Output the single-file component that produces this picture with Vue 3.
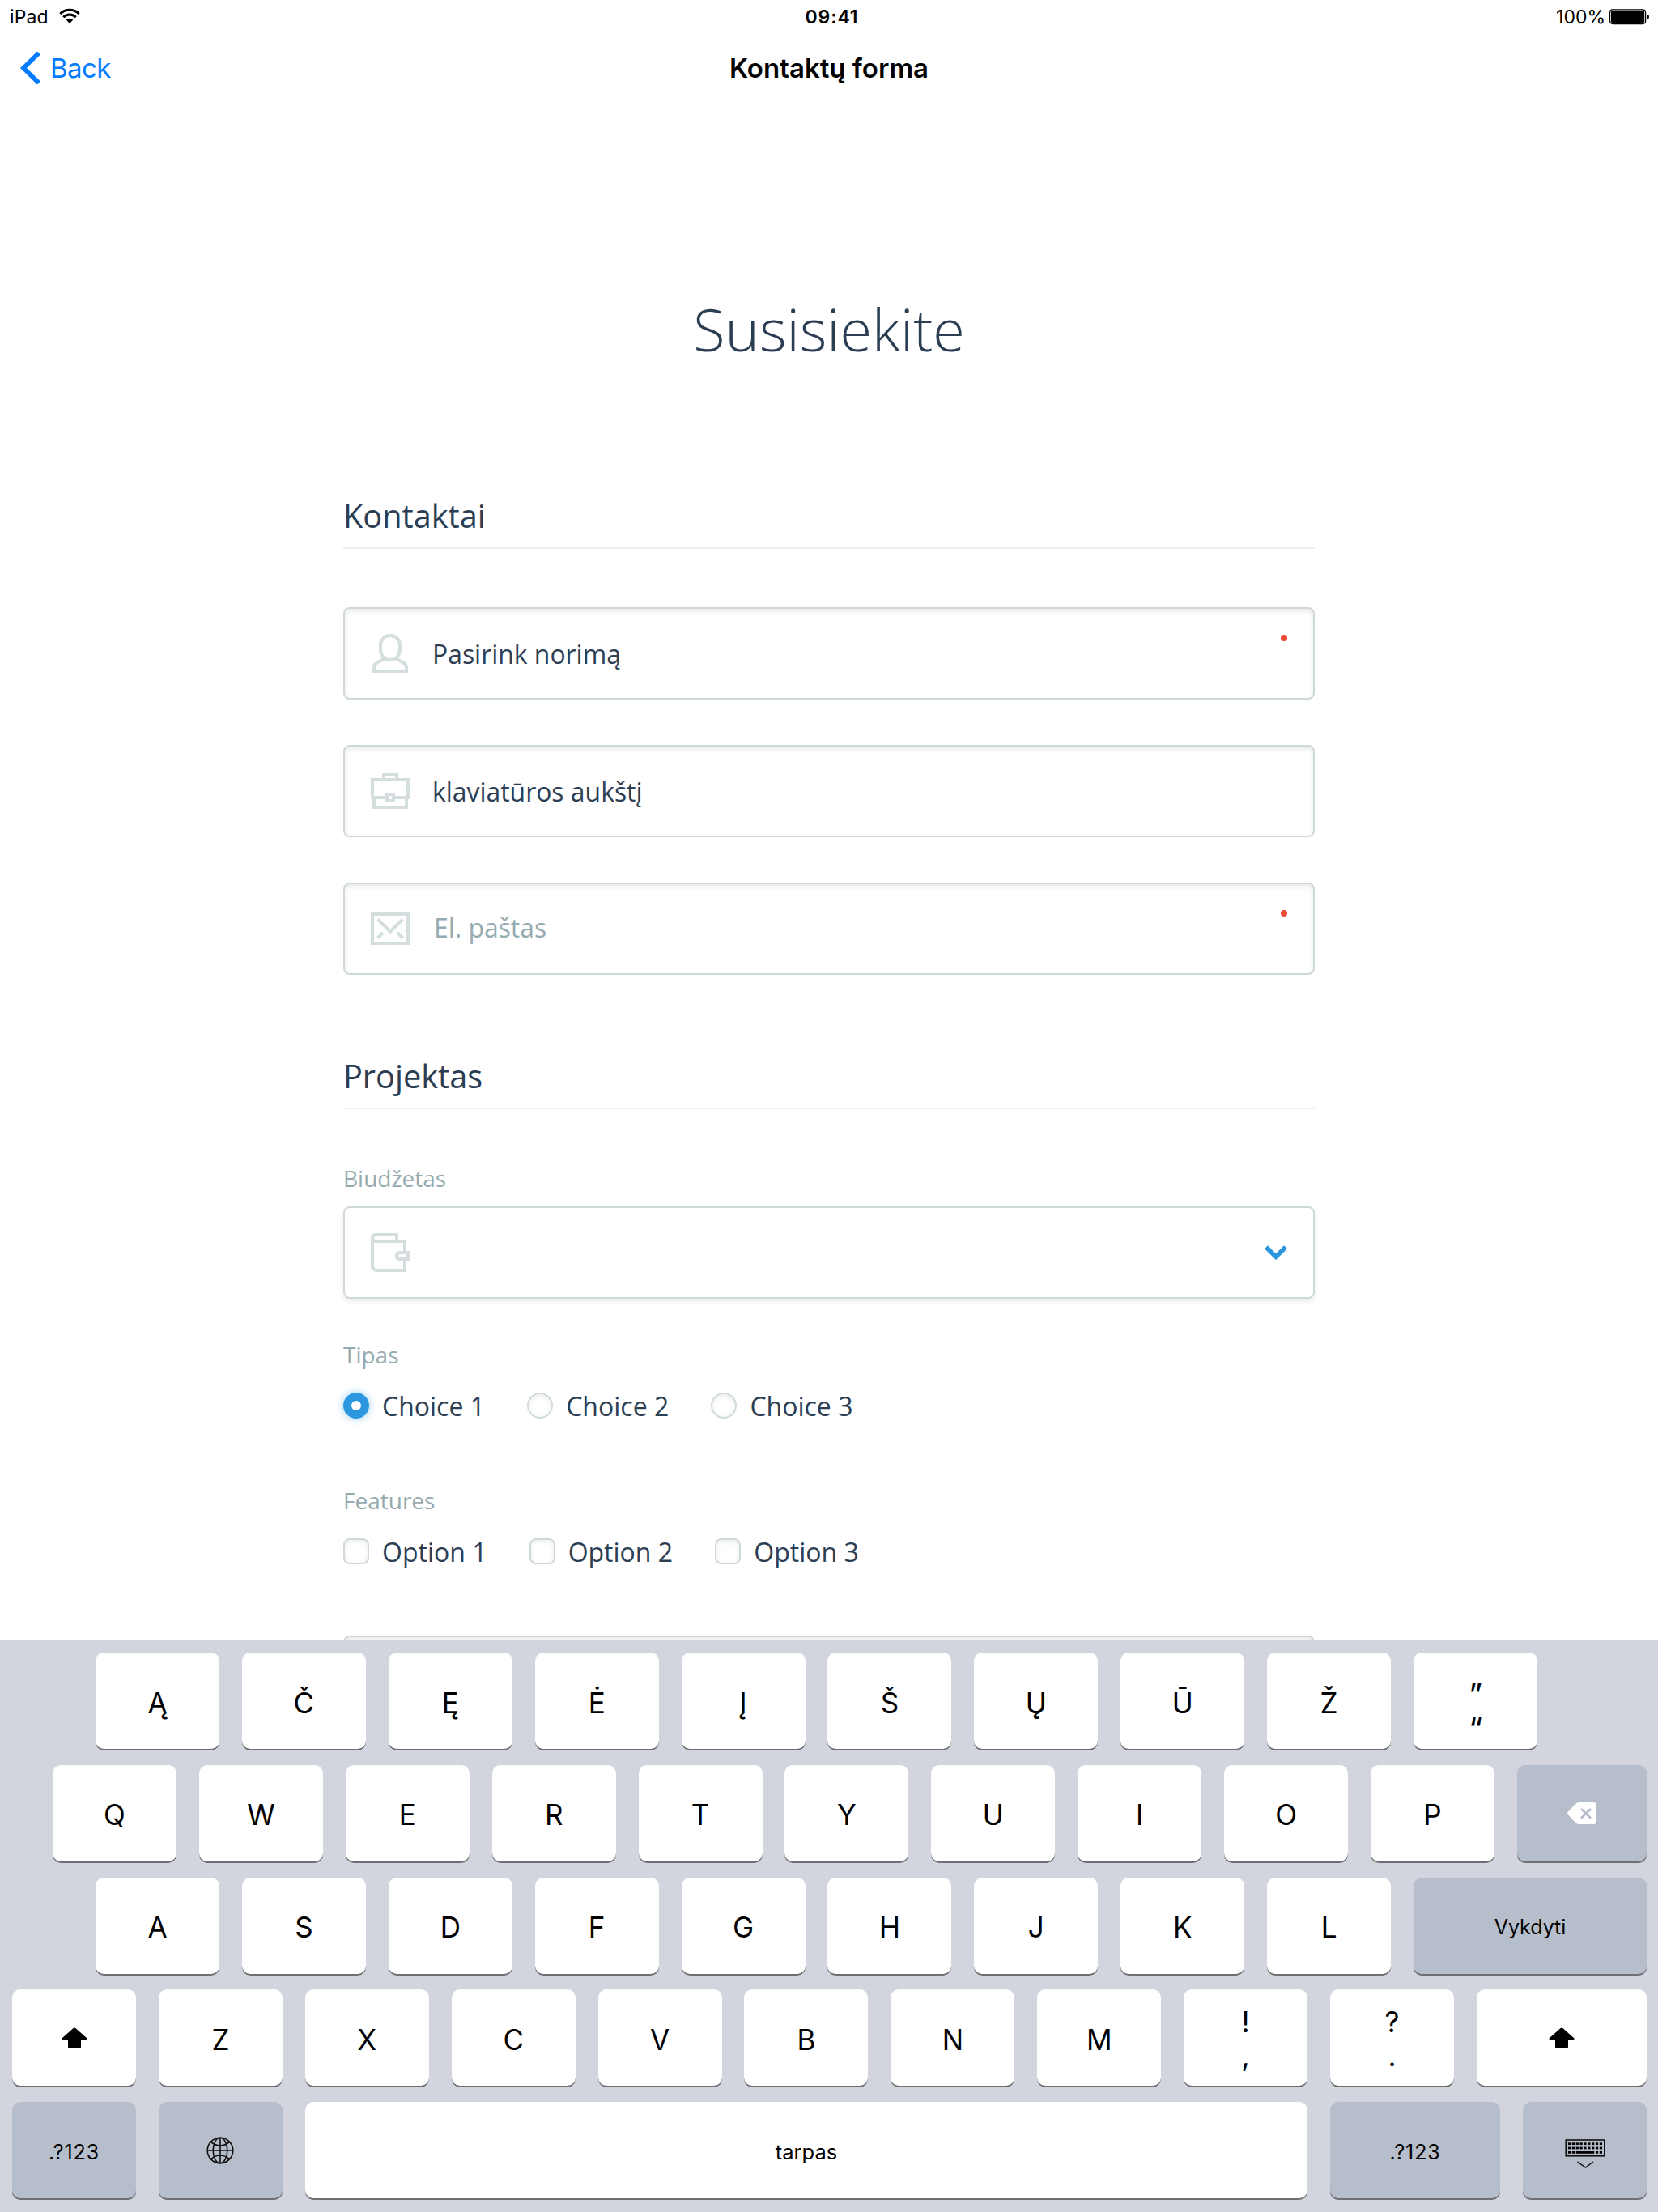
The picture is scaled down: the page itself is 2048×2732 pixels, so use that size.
<script setup>
const K = (t, n = '') => ({ t, n })
const letters = (s) => [...s].map((c) => K(c))
const rows = [
  { pad: 118, keys: [...letters('ĄČĘĖĮŠŲŪŽ'), { n: 'two quote', a: '”', b: '“' }] },
  { pad: 65, keys: [...letters('QWERTYUIOP'), { n: 'gray back', icon: 'back' }] },
  { pad: 118, keys: [...letters('ASDFGHJKL'), K('Vykdyti', 'gray small go')] },
  { pad: 15, keys: [{ icon: 'shift', n: '' }, ...letters('ZXCVBNM'), { n: 'two', a: '!', b: ',' }, { n: 'two', a: '?', b: '.' }, { n: 'wide', icon: 'shift' }] },
  { pad: 15, keys: [K('.?123', 'gray small num'), { n: 'gray', icon: 'globe' }, K('tarpas', 'small space'), K('.?123', 'gray small num wide'), { n: 'gray', icon: 'hide' }] },
]
</script>

<template>
  <div class="screen">
    <header class="top">
      <div class="status">
        <div class="left">
          <span>iPad</span>
          <svg class="wifi" width="26" height="20" viewBox="0 0 26 20">
            <g fill="none" stroke="#000" stroke-width="3">
              <path d="M1.3 7 A17 17 0 0 1 24.700 7" />
              <path d="M5.300 11.200 A11 11 0 0 1 20.700 11.200" />
            </g>
            <path d="M13 19 L8.700 14.600 A6.200 6.200 0 0 1 17.300 14.600 Z" />
          </svg>
        </div>
        <b class="time">09:41</b>
        <div class="right">
          <span>100%</span>
          <svg width="50" height="20" viewBox="0 0 50 20">
            <rect x="0.600" y="0.800" width="44" height="17.800" rx="3.500" fill="none" stroke="#000" stroke-width="1.200" />
            <rect x="2" y="2.200" width="41.200" height="15" rx="2" />
            <path d="M46 6.500 q3 .5 3 3.200 t-3 3.200z" />
          </svg>
        </div>
      </div>
      <nav class="nav">
        <a class="backlink">
          <svg width="26" height="42" viewBox="0 0 26 42"><path d="M23 2.500 L4 21 L23 39.500" fill="none" stroke="#007aff" stroke-width="5.600" /></svg>
          <span>Back</span>
        </a>
        <h1>Kontaktų forma</h1>
        <i></i>
      </nav>
    </header>

    <main class="form">
      <h2>Susisiekite</h2>
      <h3>Kontaktai</h3>
      <div class="field">
        <svg class="ico" width="48" height="48" viewBox="0 0 48 48">
          <path d="M24 2 C16 2 12 8 12 14 V19 C12 26 16 32 24 32 C32 32 36 26 36 19 V14 C36 8 32 2 24 2 Z M16.500 30.500 L7 36 Q4 38 4 41 V46 H44 V41 Q44 38 41 36 L31.500 30.500" />
        </svg>
        <span>Pasirink norimą</span><em></em>
      </div>
      <div class="field">
        <svg class="ico" width="48" height="48" viewBox="0 0 48 48">
          <path d="M16 9 V4 H32 V9 M2 34 V10 H46 V34 M0 32 H19 M29 32 H48 M4 32 V44 H44 V32 M20 28 H28 V36 H20 Z" />
        </svg>
        <span>klaviatūros aukštį</span>
      </div>
      <div class="field empty">
        <svg class="ico" width="48" height="48" viewBox="0 0 48 48">
          <path d="M2 6 H46 V42 H2 Z M8.500 12.500 L24 27.500 L39.500 12.500 M8.500 35.500 L15 29 M39.500 35.500 L33 29" />
        </svg>
        <span>El. paštas</span><em></em>
      </div>

      <h3 class="second">Projektas</h3>
      <label class="cap">Biudžetas</label>
      <div class="field select">
        <svg class="ico" width="48" height="52" viewBox="0 0 48 52">
          <path d="M32 11 V4 H6 Q2 4 2 8 V42 Q2 48 8 48 H42 V35 M42 26 V12 H6 Q2 12 2 8 M46 26 H36 Q32 26 32 30 T36 34 H46 Z" />
        </svg>
        <svg class="chev" width="28" height="18" viewBox="0 0 28 18"><path d="M2 2.200 L14 14.200 L26 2.200" fill="none" stroke="#2c97de" stroke-width="5.600" /></svg>
      </div>
      <label class="cap tipas">Tipas</label>
      <div class="opts radios">
        <div v-for="n in 3" :key="n" class="opt"><i :class="{ on: n === 1 }"></i><span>Choice {{ n }}</span></div>
      </div>
      <label class="cap feat">Features</label>
      <div class="opts checks">
        <div v-for="n in 3" :key="n" class="opt"><i></i><span>Option {{ n }}</span></div>
      </div>
      <div class="field last"></div>
    </main>

    <section class="kbd">
      <div v-for="(r, ri) in rows" :key="ri" class="row" :style="{ paddingLeft: r.pad + 'px' }">
        <div v-for="(k, ki) in r.keys" :key="ki" class="key" :class="k.n">
          <template v-if="k.a"><span>{{ k.a }}</span><span>{{ k.b }}</span></template>
          <svg v-else-if="k.icon === 'shift'" width="32" height="26" viewBox="0 0 32 26">
            <path d="M14.600 1 Q16 0 17.400 1 L31.500 13.500 Q32 15 30.500 15 H24 V24 Q24 25.500 22.500 25.500 H9.500 Q8 25.500 8 24 V15 H1.500 Q0 15 .5 13.500 Z" />
          </svg>
          <svg v-else-if="k.icon === 'back'" width="36" height="27" viewBox="0 0 36 27">
            <path d="M0.600 12 L10 2 Q12 0 14 0 H32 Q36 0 36 4 V23 Q36 27 32 27 H14 Q12 27 10 25 L0.600 15 Q-.4 13.500 .6 12 Z" fill="#fff" />
            <path d="M17 8 L29 19.500 M29 8 L17 19.500" stroke="#b7becb" stroke-width="2.800" />
          </svg>
          <svg v-else-if="k.icon === 'globe'" width="34" height="34" viewBox="0 0 34 34" fill="none" stroke="#111" stroke-width="1.600">
            <circle cx="17" cy="17" r="15.800" /><ellipse cx="17" cy="17" rx="8.800" ry="15.800" />
            <path d="M17 1 V33 M1 17 H33 M5.500 6.500 Q17 15.500 28.500 6.500 M5.500 27.500 Q17 18.500 28.500 27.500" />
          </svg>
          <svg v-else-if="k.icon === 'hide'" class="hide" width="50" height="36" viewBox="0 0 50 36">
            <rect x="1.200" y="1" width="47.600" height="19.800" fill="none" stroke="#111" stroke-width="1.600" />
            <g v-for="y in [4.300, 9.600, 15]" :key="y">
              <template v-for="(c, i) in 9" :key="c">
                <rect v-if="y < 14 || i < 2 || i > 6" :x="4 + i * 4.850" :y="y" width="3.200" height="2.800" />
              </template>
            </g>
            <rect x="13.700" y="15" width="22.500" height="2.800" />
            <path d="M15.500 28 L25.500 35 L35 28" fill="none" stroke="#111" stroke-width="1.500" />
          </svg>
          <span v-else>{{ k.t }}</span>
        </div>
      </div>
    </section>
  </div>
</template>

<style>
body { margin: 0; background: #fff; }
</style>

<style scoped>
.screen { width: 2048px; height: 2732px; overflow: hidden; display: flex; flex-direction: column; background: #fff; font-family: Inter, sans-serif; color: #000; }
.top { height: 129px; box-sizing: border-box; border-bottom: 1px solid #b2b2b2; flex: none; }
.status { height: 40px; display: grid; grid-template-columns: 1fr auto 1fr; font-size: 23px; line-height: 42px; }
.left { display: flex; padding-left: 12px; gap: 13px; align-items: flex-start; }
.left span { letter-spacing: .1px; }
.wifi { margin-top: 10px; }
.time { font-weight: 600; letter-spacing: .9px; padding-left: 7px; }
.right { display: flex; justify-content: flex-end; gap: 5px; padding-right: 10px; }
.right svg { margin-top: 11px; }
.nav { height: 88px; display: grid; grid-template-columns: 1fr auto 1fr; align-items: center; font-size: 33px; }
.backlink { display: flex; align-items: center; gap: 11px; padding-left: 25px; color: #007aff; letter-spacing: -.6px; }
.nav h1 { margin: 0; font-size: 33px; font-weight: 600; }
.form { width: 1200px; margin: 0 auto; height: 1896px; flex: none; overflow: hidden; padding: 0 10px; font-family: "Open Sans", sans-serif; color: #2c3e54; }
h2 { margin: 0; padding-top: 225px; height: 106px; line-height: 104px; font-size: 72px; font-weight: 300; text-align: center; }
h3 { margin: 136px 0 72px; height: 82px; line-height: 83px; box-sizing: border-box; border-bottom: 2px solid #ecf0f0; font-size: 39.700px; font-weight: 400; }
h3.second { margin: 84px 0 67px; }
.field { height: 114px; box-sizing: border-box; border: 2px solid #cfd9db; border-radius: 8px; margin-bottom: 56px; display: flex; align-items: center; padding-left: 32px; gap: 28px; font-size: 31.900px; box-shadow: inset 0 3px 6px rgba(0, 0, 0, .09); position: relative; }
.ico { flex: none; fill: none; stroke: #d5dedf; stroke-width: 4; }
.field em { position: absolute; right: 32px; top: 32px; width: 8px; height: 8px; border-radius: 50%; background: #e94b35; }
.empty { color: #95abb0; }
.empty span { padding: 0 0 3px 2px; }
.field.select { box-shadow: 0 3px 6px rgba(0, 0, 0, .08); justify-content: space-between; padding-right: 32px; margin: 0; }
.cap { display: block; height: 40px; line-height: 37px; font-size: 28px; color: #95abb0; margin-bottom: 13px; }
.tipas { margin: 51px 0 21px; }
.feat { margin: 79px 0 21px; }
.opts { display: flex; height: 40px; align-items: center; font-size: 32px; gap: 52.200px; }
.opt { display: flex; align-items: center; gap: 16px; }
.opt i { width: 32px; height: 32px; box-sizing: border-box; border: 2px solid #cfd9db; box-shadow: inset 0 2px 6px rgba(0, 0, 0, .08); border-radius: 8px; }
.radios i { border-radius: 50%; }
.radios i.on { border: 10px solid #2c97de; box-shadow: 0 0 10px rgba(44, 151, 222, .5); }
.last { margin: 84px 0 0; }
.kbd { height: 707px; box-sizing: border-box; padding-top: 16px; background: #d2d5dd; display: flex; flex-direction: column; gap: 17.750px; }
.row { display: flex; gap: 27.900px; padding-right: 14px; }
.key { width: 153px; height: 121px; box-sizing: border-box; padding-top: 2px; flex: none; border-radius: 10px; background: #fff; box-shadow: inset 0 -2px 0 #6d6f73; display: flex; align-items: center; justify-content: center; font-size: 35px; line-height: 42px; }
.key svg { margin-top: -3px; }
.key .hide { margin-top: 4px; }
.gray { background: #b7becb; }
.small { font-size: 25px; }
.num { letter-spacing: .9px; }
.back, .go, .space { flex: 1; }
.wide { width: 210px; }
.space { width: auto; font-size: 25.500px; }
.two { flex-direction: column; padding: 0; }
.quote { padding-top: 24px; font-size: 38px; }
</style>
